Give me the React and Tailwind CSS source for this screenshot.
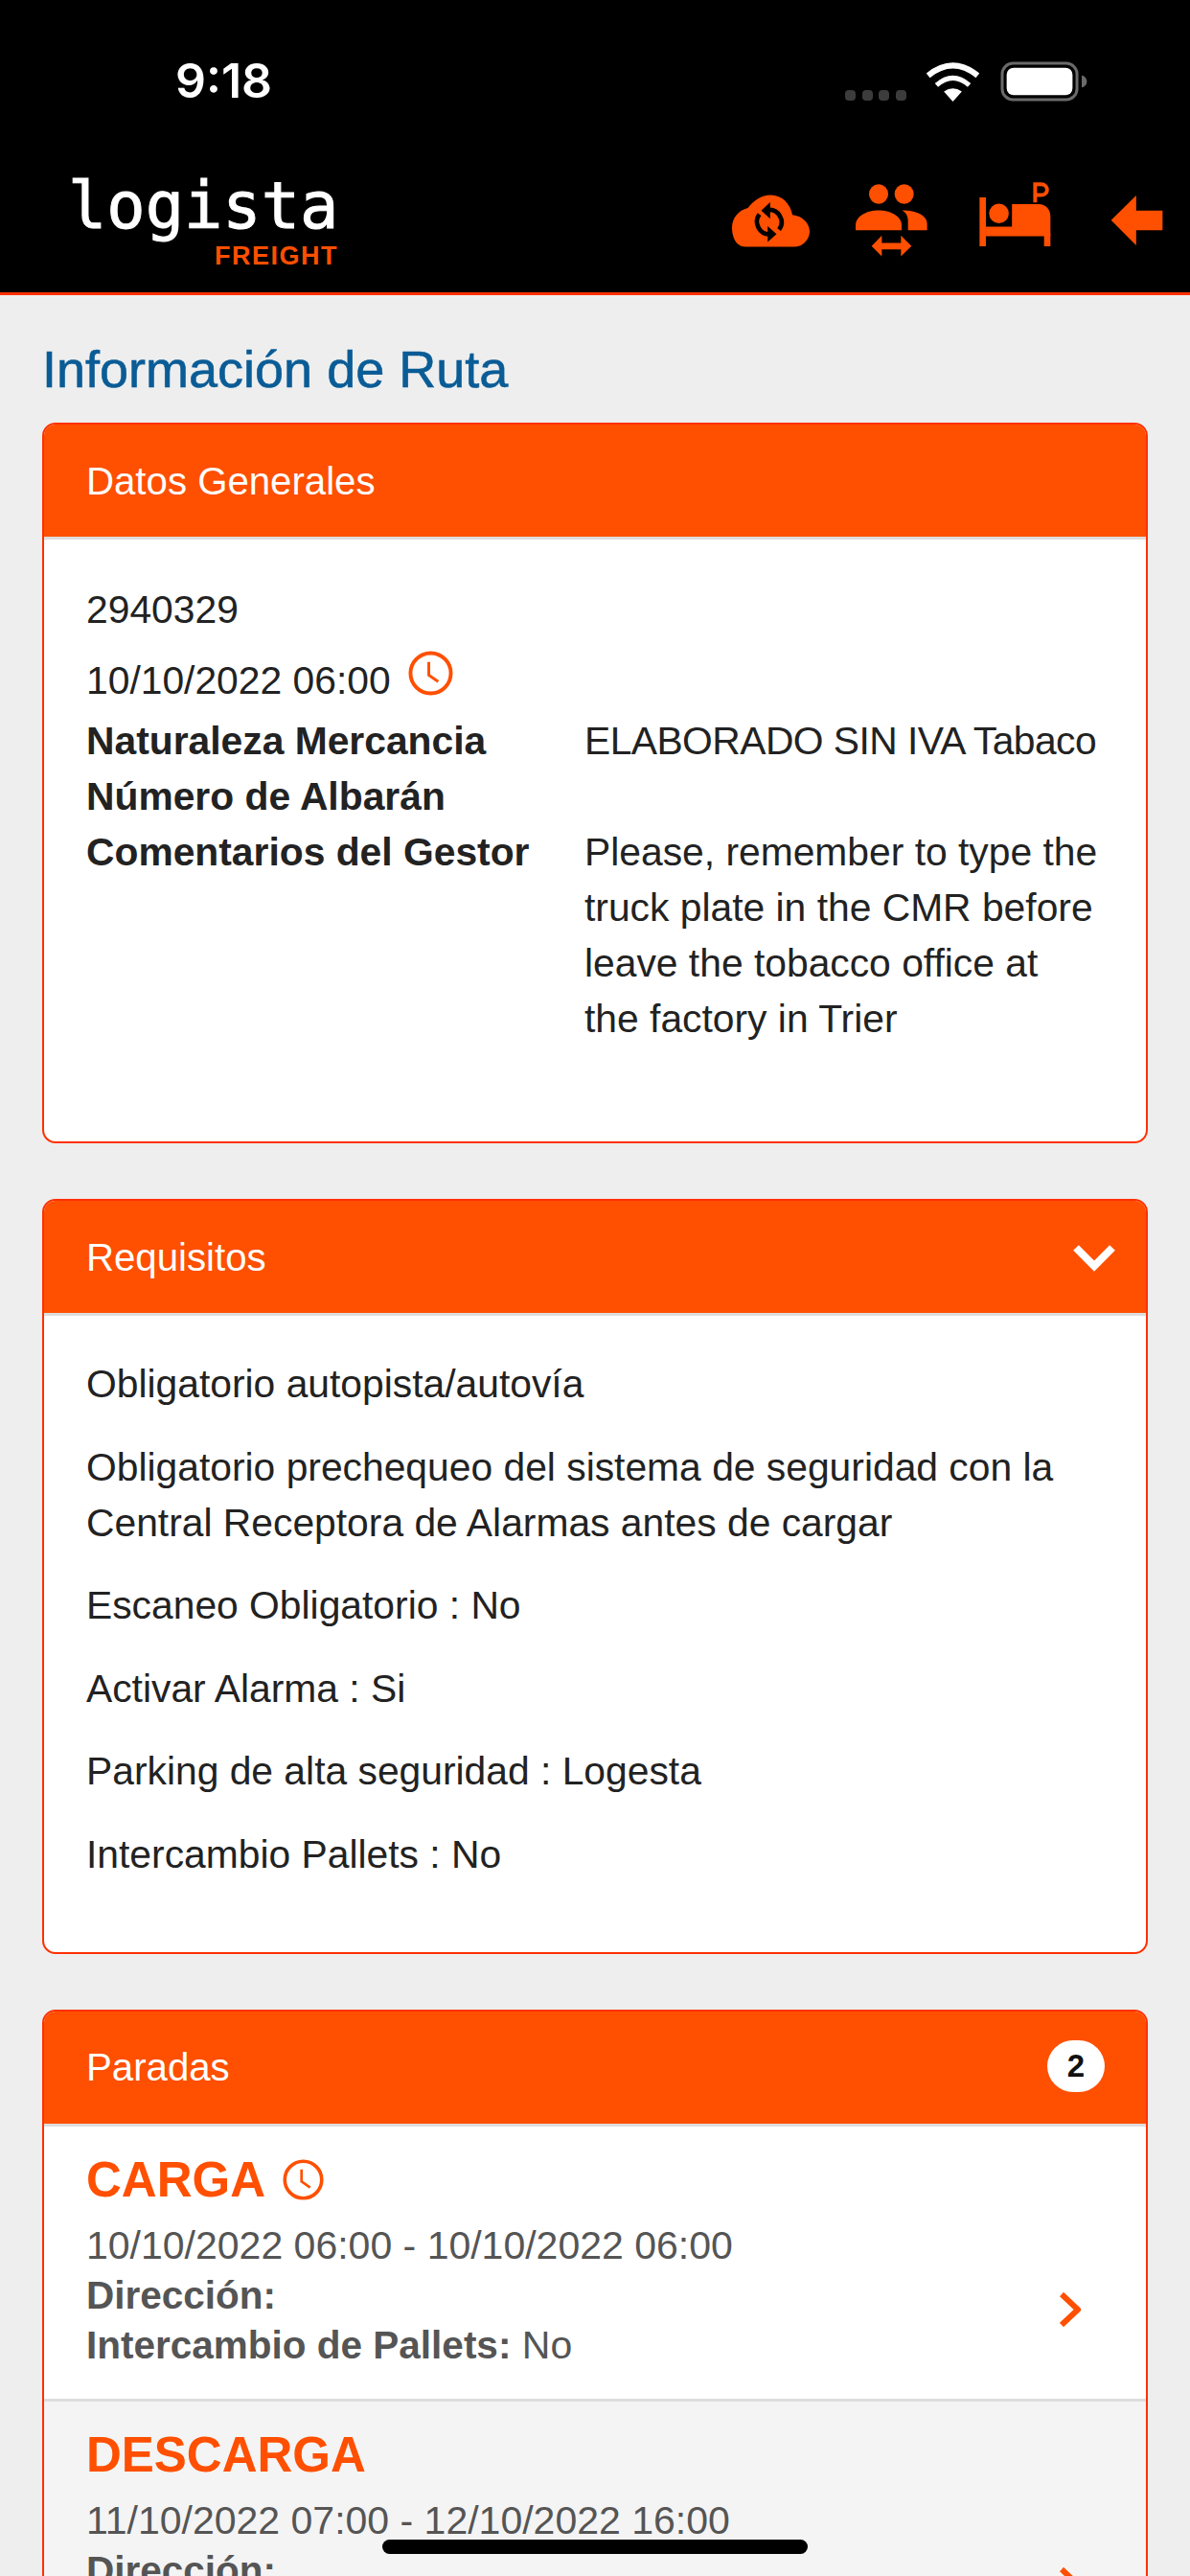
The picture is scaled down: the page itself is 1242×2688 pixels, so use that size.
import React from 'react';

const font = { fontFamily: '"Liberation Sans", Arial, sans-serif' };

const ClockIcon = ({ className }) => (
    <svg viewBox="0 0 48 48" className={className} fill="none" stroke="#ff4f00">
        <circle cx="24" cy="24" r="21.5" strokeWidth="4" />
        <path d="M22 12v14l10 7" strokeWidth="3" />
    </svg>
);

const CloudSync = () => (
    <svg viewBox="38 67 244 163" className="w-[81px] h-[55px]">
        <path fill="#ff4f00" d="M80 230C55 230 38 205 38 170C38 140 58 115 88 108C105 85 130 67 160 67C195 67 222 95 228 130C258 133 282 155 282 182C282 208 260 230 235 230Z" />
        <path fill="none" stroke="#000" strokeWidth="14" d="M150 114A39 39 0 0 1 186 176" />
        <path fill="none" stroke="#000" strokeWidth="14" d="M158 190A39 39 0 0 1 124 128" />
        <polygon fill="#000" points="158,90 158,142 130,116" />
        <polygon fill="#000" points="150,165 150,215 178,190" />
    </svg>
);

const PeopleSwap = () => (
    <svg viewBox="428 36 225 227" className="w-[75px] h-[76px]" fill="#ff4f00">
        <ellipse cx="500" cy="67" rx="30" ry="31" />
        <ellipse cx="580" cy="67" rx="30" ry="31" />
        <path d="M428 180V165C428 135 465 118 500 118C535 118 572 135 572 165V180Z" />
        <path d="M574 118C620 118 652 135 652 160V180H592V150C592 135 585 125 574 118Z" />
        <polygon points="478,230 510,197 510,220 570,220 570,197 603,230 570,262 570,240 510,240 510,262" />
    </svg>
);

const BedParking = () => (
    <svg viewBox="45 28 224 202" className="w-[75px] h-[67px] mb-[13px]" fill="#ff4f00">
        <rect x="45" y="76" width="20" height="154" />
        <rect x="248" y="190" width="20" height="40" />
        <circle cx="106" cy="127" r="31" />
        <path d="M147 97H230C255 97 268 115 268 135V198H65V168H147Z" />
        <path fill="none" stroke="#ff4f00" strokeWidth="12" d="M220 92V35H238C264 35 264 69 238 69H220" />
    </svg>
);

const BackArrow = () => (
    <svg viewBox="457 70 160 155" className="w-[55px] h-[52px]" fill="#ff4f00">
        <polygon points="457,147 535,70 535,117 617,117 617,178 535,178 535,225" />
    </svg>
);

const WifiIcon = () => (
    <svg viewBox="288 38 170 122" className="w-[57px] h-[41px]" fill="none" stroke="#fff">
        <path strokeWidth="18" d="M296 79Q373 17 450 79" />
        <path strokeWidth="15" d="M322 109Q373 64 424 109" />
        <path fill="#fff" stroke="none" d="M373 160L345 129Q373 109 401 129Z" />
    </svg>
);

const BatteryIcon = () => (
    <svg viewBox="520 36 274 126" className="w-[91px] h-[42px]">
        <rect x="526" y="42" width="235" height="114" rx="34" fill="none" stroke="#6a6a6a" strokeWidth="9" />
        <rect x="540" y="56" width="207" height="86" rx="22" fill="#fff" />
        <path d="M776 80C786 82 792 90 792 99C792 108 786 116 776 118Z" fill="#6a6a6a" />
    </svg>
);

const Card = ({ title, right, children }) => (
    <div className="mb-[58px] rounded-[14px] border-2 border-[#ff3000] bg-white overflow-hidden">
        <div className="flex h-[117px] items-center justify-between bg-[#ff4f00] pl-[44px] pr-[43px] text-[40.2px] text-white">
            <span className="pt-[3px]">{title}</span>
            {right}
        </div>
        <div className="h-[3px] bg-[#dddddd]"></div>
        {children}
    </div>
);

const Stop = ({ title, clock, date, bg }) => (
    <div className={`flex items-end justify-between pl-[44px] pr-[68px] h-[287px] border-b-[3px] border-[#dddddd] pb-[75px] ${bg}`}>
        <div className="self-start pt-[26px] text-[41px] leading-[52px] text-[#555555]">
            <div className="flex items-center h-[60px] mb-[12px] text-[51px] font-bold text-[#ff4f00]">
                {title}
                {clock && <ClockIcon className="ml-[18px] w-[43px] h-[43px]" />}
            </div>
            <div>{date}</div>
            <div className="text-[40.5px] font-bold">Dirección:</div>
            <div><span className="text-[40.5px] font-bold">Intercambio de Pallets:</span> No</div>
        </div>
        <svg viewBox="0 0 22 36" className="w-[22px] h-[36px]" fill="none" stroke="#ff4f00" strokeWidth="6">
            <path d="M2 2l17 16L2 34" />
        </svg>
    </div>
);

const requisitos = [
    'Obligatorio autopista/autovía',
    'Obligatorio prechequeo del sistema de seguridad con la Central Receptora de Alarmas antes de cargar',
    'Escaneo Obligatorio : No',
    'Activar Alarma : Si',
    'Parking de alta seguridad : Logesta',
    'Intercambio Pallets : No',
];

const App = () => {
    return (
        <div className="relative h-[2688px] overflow-hidden bg-[#eeeeee]" style={font}>
            <header className="h-[308px] border-b-[3px] border-[#ff3000] bg-black">
                <div className="flex items-end justify-between pl-[183px] pr-[107px] pt-[62px]">
                    <span className="text-[50px] leading-[44px] font-semibold text-white" style={{ fontFamily: 'Inter, sans-serif' }}>9:18</span>
                    <div className="flex items-end">
                        <div className="flex gap-[6.7px] mb-[1px] mr-[20px]">
                            <span className="w-[11px] h-[11px] rounded-[4px] bg-[#3c3c3c]"></span>
                            <span className="w-[11px] h-[11px] rounded-[4px] bg-[#3c3c3c]"></span>
                            <span className="w-[11px] h-[11px] rounded-[4px] bg-[#3c3c3c]"></span>
                            <span className="w-[11px] h-[11px] rounded-[4px] bg-[#3c3c3c]"></span>
                        </div>
                        <WifiIcon />
                        <div className="ml-[21px]"><BatteryIcon /></div>
                    </div>
                </div>
                <div className="mt-[78px] flex items-start justify-between pl-[71px] pr-[28px]">
                    <div className="w-[282px]">
                        <div className="text-[67px] leading-[62px] text-white [-webkit-text-stroke:1px_#fff]" style={{ fontFamily: '"DejaVu Sans Mono", monospace' }}>logista</div>
                        <div className="mt-[11px] text-right text-[27px] leading-[20px] font-bold tracking-[1.5px] text-[#ff4f00]">FREIGHT</div>
                    </div>
                    <div className="mt-[6px] flex items-center">
                        <CloudSync />
                        <div className="ml-[48px]"><PeopleSwap /></div>
                        <div className="ml-[54px]"><BedParking /></div>
                        <div className="ml-[62px]"><BackArrow /></div>
                    </div>
                </div>
            </header>

            <main className="px-[44px]">
                <h1 className="pt-[51px] pb-[30px] text-[54px] leading-[52px] text-[#0a5c96] [-webkit-text-stroke:0.6px_#0a5c96]">Información de Ruta</h1>

                <Card title="Datos Generales">
                    <div className="pl-[44px] pr-[50px] pt-[44px] pb-[99px] text-[40.8px] leading-[58px] text-[#222222]">
                        <div className="h-[58px] mb-[16px]">2940329</div>
                        <div className="flex items-start h-[58px]">
                            10/10/2022 06:00
                            <ClockIcon className="ml-[18px] -mt-[2px] w-[47px] h-[47px]" />
                        </div>
                        <div className="mt-[5px] grid grid-cols-[520px_minmax(0,1fr)]">
                            <b>Naturaleza Mercancia</b>
                            <span className="whitespace-nowrap tracking-[-0.55px]">ELABORADO SIN IVA Tabaco</span>
                            <b>Número de Albarán</b>
                            <span></span>
                            <b>Comentarios del Gestor</b>
                            <span>Please, remember to type the truck plate in the CMR before leave the tobacco office at the factory in Trier</span>
                        </div>
                    </div>
                </Card>

                <Card
                    title="Requisitos"
                    right={
                        <svg viewBox="0 0 44 28" className="w-[44px] h-[28px] -mr-[11px] mt-[3px]" fill="none" stroke="#fff" strokeWidth="8">
                            <path d="M3 3l19 19L41 3" />
                        </svg>
                    }
                >
                    <div className="px-[44px] pt-[42px] pb-[44px] text-[40.8px] leading-[58px] text-[#222222]">
                        {requisitos.map((item) => (
                            <p key={item} className="mb-[28.6px]">{item}</p>
                        ))}
                    </div>
                </Card>

                <Card
                    title="Paradas"
                    right={
                        <span className="flex w-[60px] h-[54px] -mt-[3px] items-center justify-center rounded-full bg-white text-[33px] font-bold text-[#111111]">2</span>
                    }
                >
                    <Stop title="CARGA" clock date="10/10/2022 06:00 - 10/10/2022 06:00" bg="bg-white" />
                    <Stop title="DESCARGA" date="11/10/2022 07:00 - 12/10/2022 16:00" bg="bg-[#f4f4f4]" />
                </Card>
            </main>

            <div className="absolute left-[399px] top-[2650px] h-[15px] w-[444px] rounded-full bg-black"></div>
        </div>
    );
};

export default App;
